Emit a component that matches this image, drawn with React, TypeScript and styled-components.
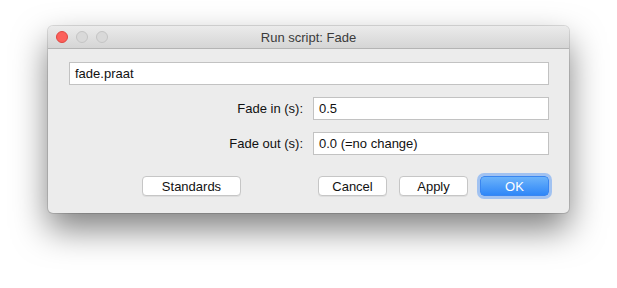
import styled, { createGlobalStyle } from 'styled-components';

const GlobalStyle = createGlobalStyle`
  html, body {
    margin: 0;
    padding: 0;
    background: #ffffff;
  }
  body {
    font-family: "Liberation Sans", Arial, sans-serif;
    font-size: 13px;
    color: #111;
  }
`;

const Page = styled.div`
  width: 617px;
  height: 288px;
  padding: 26px 0 0 48px;
  box-sizing: border-box;
`;

const Window = styled.div`
  width: 521px;
  height: 187px;
  border-radius: 5px;
  overflow: hidden;
  background: #ececec;
  box-shadow: 0 0 0 1px rgba(0, 0, 0, 0.12), 0 16px 34px rgba(0, 0, 0, 0.5);
  display: flex;
  flex-direction: column;
`;

const TitleBar = styled.div`
  height: 22px;
  flex: none;
  display: flex;
  align-items: center;
  position: relative;
  background: linear-gradient(#ebebeb, #d5d5d5);
  border-bottom: 1px solid #b4b4b4;
`;

const Lights = styled.div`
  display: flex;
  gap: 8px;
  padding-left: 8px;
`;

const Light = styled.span<{ $color: string; $border: string }>`
  width: 12px;
  height: 12px;
  border-radius: 50%;
  box-sizing: border-box;
  background: ${p => p.$color};
  border: 1px solid ${p => p.$border};
`;

const Title = styled.div`
  position: absolute;
  left: 0;
  right: 0;
  text-align: center;
  font-size: 13px;
  color: #3b3b3b;
  pointer-events: none;
`;

const Body = styled.div`
  flex: 1;
  padding: 13px 20px 0 21px;
  display: flex;
  flex-direction: column;
`;

const Field = styled.div<{ $width?: number }>`
  height: 23px;
  box-sizing: border-box;
  width: ${p => (p.$width ? `${p.$width}px` : '100%')};
  background: #fff;
  border: 1px solid #c2c2c2;
  padding: 0 5px;
  display: flex;
  align-items: center;
  font-size: 13px;
  color: #111;
`;

const Row = styled.div<{ $top: number }>`
  display: flex;
  align-items: center;
  margin-top: ${p => p.$top}px;
`;

const Label = styled.div`
  flex: 1;
  text-align: right;
  padding-right: 10px;
  font-size: 13px;
  color: #111;
`;

const ButtonRow = styled.div`
  display: flex;
  align-items: center;
  margin-top: 21px;
  padding-left: 73px;
`;

const Button = styled.div<{ $width: number }>`
  width: ${p => p.$width}px;
  height: 20px;
  box-sizing: border-box;
  background: #fff;
  border: 1px solid #c6c6c6;
  border-radius: 4px;
  box-shadow: 0 1px 0 rgba(0, 0, 0, 0.06);
  display: flex;
  align-items: center;
  justify-content: center;
  font-size: 13px;
  color: #111;
`;

const RightGroup = styled.div`
  margin-left: auto;
  display: flex;
  align-items: center;
  gap: 12px;
`;

const DefaultButton = styled(Button)`
  background: linear-gradient(#6cb3fa, #2f87f8);
  border: 1px solid #3a86f0;
  color: #fff;
  box-shadow: 0 0 0 3px rgba(100, 160, 245, 0.55);
`;

export default function App() {
  return (
    <>
      <GlobalStyle />
      <Page>
        <Window>
          <TitleBar>
            <Lights>
              <Light $color="#fc605b" $border="#de4640" />
              <Light $color="#d9d9d9" $border="#c4c4c4" />
              <Light $color="#d9d9d9" $border="#c4c4c4" />
            </Lights>
            <Title>Run script: Fade</Title>
          </TitleBar>
          <Body>
            <Field>fade.praat</Field>
            <Row $top={12}>
              <Label>Fade in (s):</Label>
              <Field $width={236}>0.5</Field>
            </Row>
            <Row $top={12}>
              <Label>Fade out (s):</Label>
              <Field $width={236}>0.0 (=no change)</Field>
            </Row>
            <ButtonRow>
              <Button $width={99}>Standards</Button>
              <RightGroup>
                <Button $width={69}>Cancel</Button>
                <Button $width={69}>Apply</Button>
                <DefaultButton $width={69}>OK</DefaultButton>
              </RightGroup>
            </ButtonRow>
          </Body>
        </Window>
      </Page>
    </>
  );
}
